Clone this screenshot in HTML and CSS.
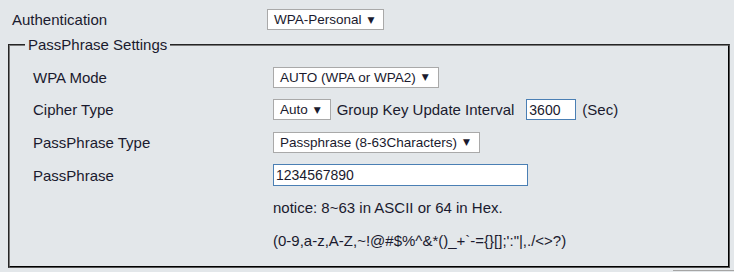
FILE: index.html
```html
<!DOCTYPE html>
<html lang="en">
<head>
  <meta charset="UTF-8">
  <title>Wireless Security</title>
  <link rel="stylesheet" href="styles.css">
</head>
<body>
  <div class="row top-row">
    <span class="label">Authentication</span>
    <span class="select">WPA-Personal <b>&#9660;</b></span>
  </div>

  <fieldset class="settings">
    <legend>PassPhrase Settings</legend>

    <div class="row">
      <span class="label">WPA Mode</span>
      <span class="select">AUTO (WPA or WPA2) <b>&#9660;</b></span>
    </div>

    <div class="row">
      <span class="label">Cipher Type</span>
      <div class="inline">
        <span class="select">Auto <b>&#9660;</b></span>
        <span class="text group-key">Group Key Update Interval</span>
        <span class="input small">3600</span>
        <span class="text">(Sec)</span>
      </div>
    </div>

    <div class="row">
      <span class="label">PassPhrase Type</span>
      <span class="select">Passphrase (8-63Characters) <b>&#9660;</b></span>
    </div>

    <div class="row">
      <span class="label">PassPhrase</span>
      <span class="input wide">1234567890</span>
    </div>

    <div class="row">
      <span></span>
      <span class="text">notice: 8~63 in ASCII or 64 in Hex.</span>
    </div>

    <div class="row">
      <span></span>
      <span class="text">(0-9,a-z,A-Z,~!@#$%^&amp;*()_+`-={}[];':"|,./&lt;&gt;?)</span>
    </div>
  </fieldset>

  <div class="bottom-edge"></div>
</body>
</html>
```

FILE: styles.css
```css
body {
  margin: 0;
  padding: 0;
  background-color: #e3e7ea;
  color: #1a1a2e;
  font-family: "Liberation Sans", Arial, sans-serif;
  font-size: 15px;
  width: 734px;
  height: 272px;
  overflow: hidden;
}
.row {
  display: grid;
  grid-template-columns: 240px 1fr;
  align-items: center;
  height: 32.6px;
}
.top-row {
  grid-template-columns: 255px 1fr;
  padding: 3px 0 0 12px;
  height: 33px;
}
.label {
  white-space: nowrap;
}
.select,
.input {
  display: inline-flex;
  align-items: center;
  justify-self: start;
  box-sizing: border-box;
  height: 21px;
  background: #fff;
  font-size: 13.5px;
  white-space: nowrap;
}
.select {
  border: 1px solid #a9a9a9;
  padding: 0 9px 0 6px;
}
.select b {
  font-family: "DejaVu Sans", sans-serif;
  font-size: 9px;
  font-weight: normal;
  margin-left: 6px;
}
.input {
  border: 1px solid #4a7fb4;
  padding: 0 2px;
  font-size: 14px;
}
.input.small {
  width: 50px;
  margin: 0 6px 0 12px;
}
.input.wide {
  width: 255px;
  height: 22px;
}
.inline {
  display: flex;
  align-items: center;
}
.group-key {
  margin-left: 6px;
}
.text {
  font-size: 15px;
  white-space: nowrap;
}
.settings {
  margin: 0 4px 0 8px;
  border: 2px groove #7a7a7a;
  border-bottom-color: #555;
  border-right-color: #555;
  padding: 8px 0 9px 23px;
}
.settings legend {
  margin-left: -8px;
  padding: 0 3px;
  font-size: 15px;
}
.bottom-edge {
  margin: 2px 0 0 673px;
  border-top: 1px solid #a5a5a5;
  height: 4px;
}
```
